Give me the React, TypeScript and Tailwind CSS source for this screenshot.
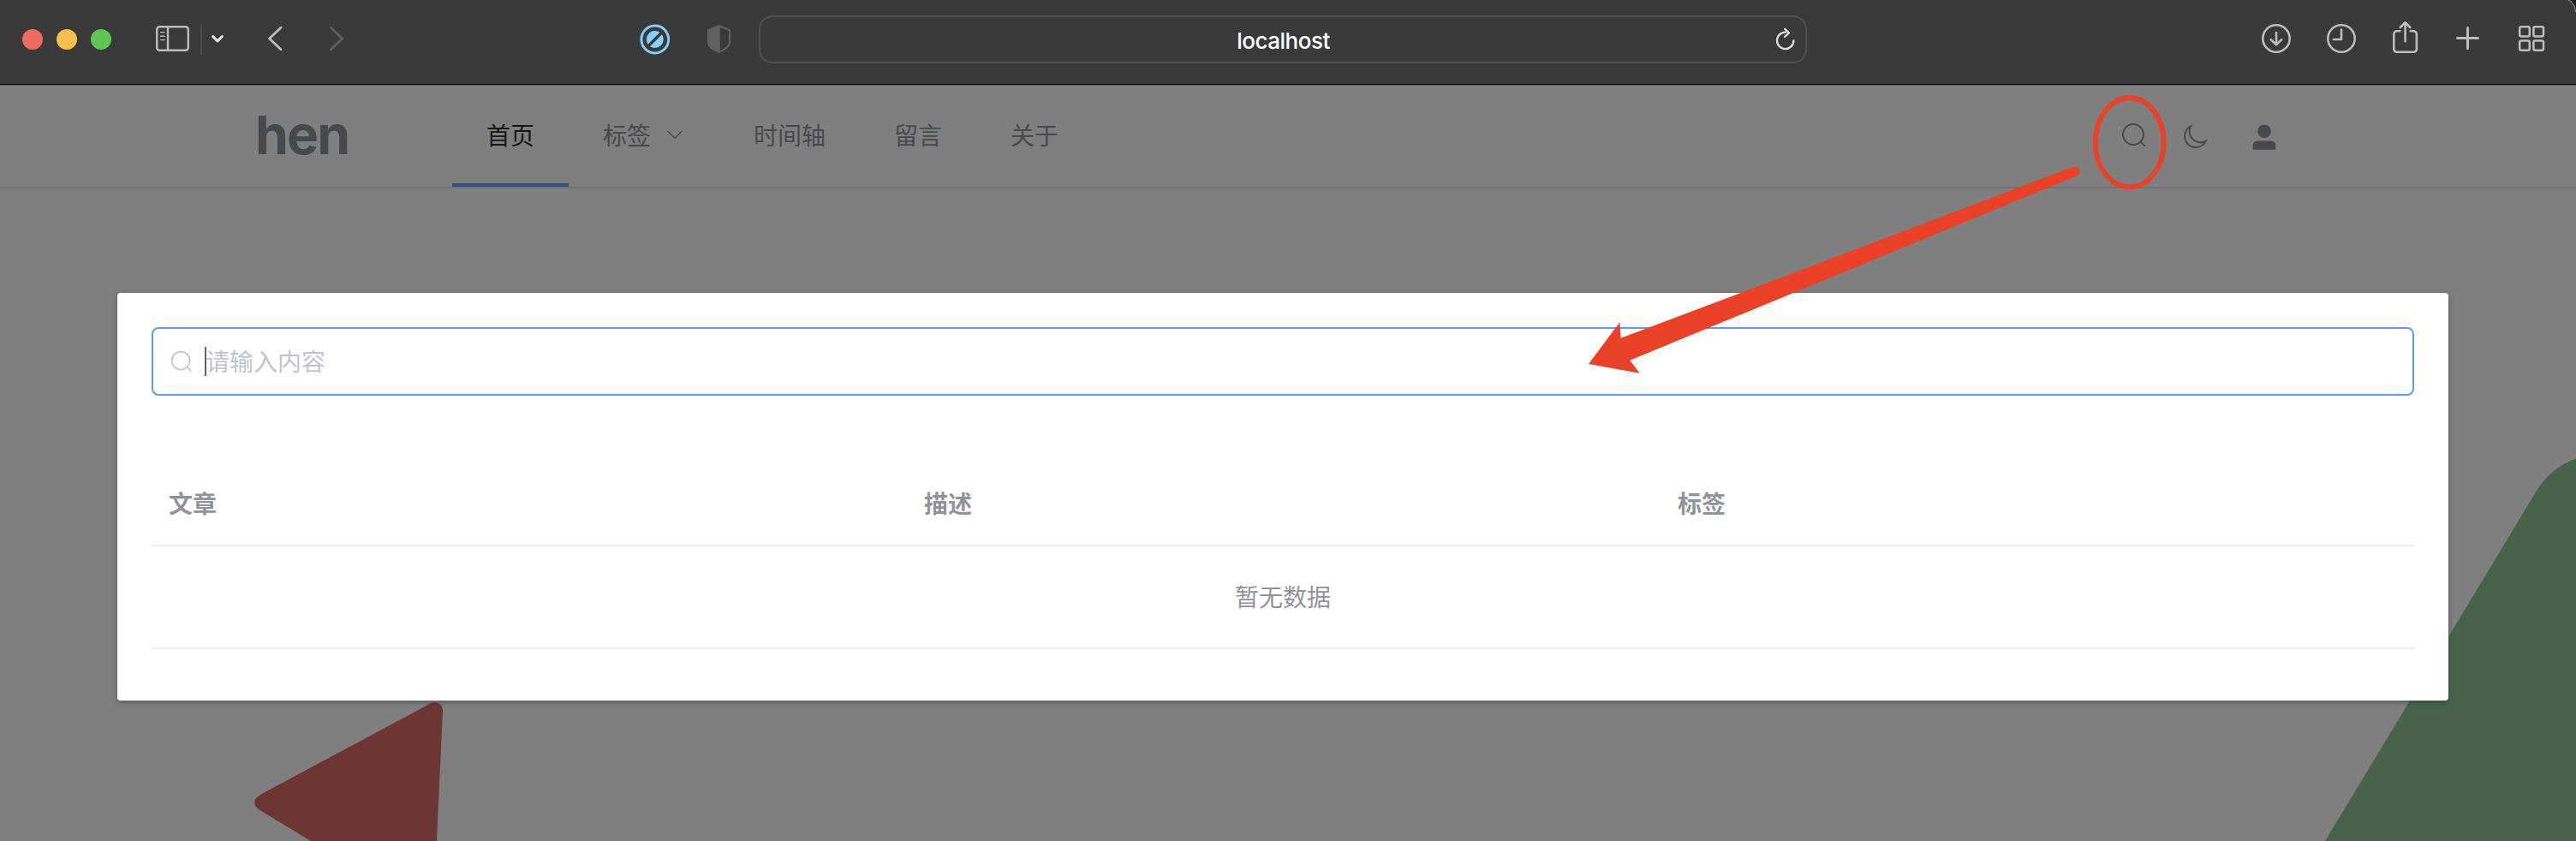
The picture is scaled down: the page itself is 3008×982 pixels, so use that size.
import React from "react";

const SEARCH_PATH =
  "m795.904 750.72 124.992 124.928a32 32 0 0 1-45.248 45.248L750.656 795.904a416 416 0 1 1 45.248-45.248zM480 832a352 352 0 1 0 0-704 352 352 0 0 0 0 704";
const MOON_PATH =
  "M240.448 240.448a384 384 0 1 0 559.424 525.696 448 448 0 0 1-542.016-542.08 390.592 390.592 0 0 0-17.408 16.384zm181.056 362.048a384 384 0 0 0 525.632 16.384A448 448 0 1 1 405.056 76.8a384 384 0 0 0 16.448 525.696";
const USER_PATH =
  "M288 320a224 224 0 1 0 448 0 224 224 0 1 0-448 0m544 608H160a32 32 0 0 1-32-32v-96a160 160 0 0 1 160-160h448a160 160 0 0 1 160 160v96a32 32 0 0 1-32 32z";
const ARROW_DOWN_PATH =
  "M831.872 340.864 512 652.672 192.128 340.864a30.592 30.592 0 0 0-42.752 0 29.12 29.12 0 0 0 0 41.6L489.664 714.24a32 32 0 0 0 44.672 0l340.288-331.712a29.12 29.12 0 0 0 0-41.728 30.592 30.592 0 0 0-42.752 0z";

function Glyph({ d, className }: { d: string; className: string }) {
  return (
    <svg viewBox="0 0 1024 1024" fill="currentColor" className={className}>
      <path d={d} />
    </svg>
  );
}

function BrowserBar() {
  return (
    <header className="relative flex h-[100px] w-full shrink-0 border-b border-[#636363] bg-black pb-px">
      <div className="flex h-[98px] w-full items-start bg-[#3a3a3a] text-[#bdbdbd]">
        <div className="flex gap-4 pt-[34px] pl-[26px]">
          <span className="size-6 rounded-full bg-[#ed6a5e]" />
          <span className="size-6 rounded-full bg-[#f5bf4f]" />
          <span className="size-6 rounded-full bg-[#61c554]" />
        </div>

        <svg className="mt-7 ml-[50px] h-9 w-[44px]" viewBox="180 28 44 36" fill="none" stroke="currentColor" strokeWidth="2.4">
          <rect x="183.2" y="31.2" width="36.6" height="27.6" rx="3.2" />
          <path d="M196 31v28" />
          <path d="M187.6 37.6h4.6M187.6 42.2h4.6M187.6 46.6h4.6" strokeWidth="1.4" strokeLinecap="round" />
        </svg>
        <span className="mt-7 ml-[10px] h-9 w-[2px] bg-[#4c4c4c]" />
        <svg className="mt-9 ml-2 h-5 w-5" viewBox="244 36 20 20" fill="none" stroke="#e6e6e6" strokeWidth="3" strokeLinecap="round" strokeLinejoin="round">
          <path d="M248.7 42.6l5.3 5.4 5.3-5.4" />
        </svg>
        <svg className="mt-7 ml-[46px] h-9 w-[22px]" viewBox="310 28 22 36" fill="none" stroke="#bdbdbd" strokeWidth="2.8" strokeLinecap="round" strokeLinejoin="round">
          <path d="M328 32.2L314.6 45 328 57.8" />
        </svg>
        <svg className="mt-7 ml-[50px] h-9 w-[22px]" viewBox="382 28 22 36" fill="none" stroke="#606060" strokeWidth="2.8" strokeLinecap="round" strokeLinejoin="round">
          <path d="M386.4 32.2L399.8 45l-13.4 12.8" />
        </svg>

        <svg className="mt-7 ml-[342px] h-9 w-[38px]" viewBox="746 28 38 36">
          <circle cx="764.8" cy="46" r="15.9" fill="none" stroke="#84ccfc" strokeWidth="3" />
          <circle cx="764.8" cy="46" r="10" fill="#84d3ff" />
          <path d="M755.6 55.2l18.4-18.4" stroke="#3a3a3a" strokeWidth="3.6" />
        </svg>
        <svg className="mt-7 ml-10 h-9 w-[32px]" viewBox="824 28 32 36" fill="none" stroke="#606060" strokeWidth="2.2" strokeLinejoin="round">
          <path d="M839.6 30.2l-12.5 5V49c0 5.500 5.500 8.500 12.500 12 7-3.500 12.500-6.500 12.500-12V35.200z" />
          <path d="M839.6 30.2l-12.500 5V49c0 5.500 5.500 8.500 12.500 12z" fill="#606060" />
        </svg>

        <div className="mt-[18px] ml-[30px] flex h-14 w-[1224px] items-center rounded-[16px] border-2 border-[#505050]">
          <div className="flex-1 pt-[3px] pl-[40px] text-center font-['Inter'] text-[26px] leading-none font-medium tracking-[-0.5px] text-white">
            localhost
          </div>
          <svg className="mr-[9px] h-[34px] w-[30px]" viewBox="2070 29 30 34" fill="none" stroke="#e0e0e0" strokeWidth="2.3" strokeLinecap="round" strokeLinejoin="round">
            <path d="M2086.300 37.700A9.700 9.700 0 1 0 2095.400 47.400" />
            <path d="M2085.200 33.800l4.800 4.500-5 4.700" />
          </svg>
        </div>

        <svg className="mt-7 ml-[528px] h-9 w-10" viewBox="2638 28 40 36" fill="none" stroke="currentColor" strokeWidth="2.6" strokeLinecap="round" strokeLinejoin="round">
          <circle cx="2658" cy="45" r="15.7" />
          <path d="M2658 38v14M2651.800 46.300l6.200 6 6.200-6" />
        </svg>
        <svg className="mt-7 ml-9 h-9 w-10" viewBox="2714 28 40 36" fill="none" stroke="currentColor" strokeWidth="2.6" strokeLinecap="round" strokeLinejoin="round">
          <circle cx="2734" cy="45" r="15.700" />
          <path d="M2734 34.500V46h-9.200" />
        </svg>
        <svg className="mt-6 ml-9 h-10 w-9" viewBox="2790 24 36 40" fill="none" stroke="currentColor" strokeWidth="2.6" strokeLinecap="round" strokeLinejoin="round">
          <path d="M2802.500 36.300h-3.700a3.500 3.500 0 0 0-3.500 3.500v17.500a3.500 3.500 0 0 0 3.500 3.500h19.600a3.500 3.500 0 0 0 3.500-3.500V39.800a3.500 3.500 0 0 0-3.500-3.500h-3.700" />
          <path d="M2808.600 48.300V26.500M2802.800 32l5.800-5.700 5.800 5.700" />
        </svg>
        <svg className="mt-7 ml-[38px] h-9 w-9" viewBox="2864 28 36 36" fill="none" stroke="currentColor" strokeWidth="3" strokeLinecap="round">
          <path d="M2881.500 32.500v24M2869.500 44.500h24" />
        </svg>
        <svg className="mt-7 ml-10 h-9 w-9" viewBox="2940 28 36 36" fill="none" stroke="currentColor" strokeWidth="2.500">
          <rect x="2942.200" y="31.200" width="11.600" height="11.400" rx="2" />
          <rect x="2958.400" y="31.200" width="11.600" height="11.400" rx="2" />
          <rect x="2942.200" y="47.400" width="11.600" height="11.400" rx="2" />
          <rect x="2958.400" y="47.400" width="11.600" height="11.400" rx="2" />
        </svg>
      </div>
      <svg className="absolute top-0 right-0 h-5 w-5" viewBox="0 0 20 20" fill="none">
        <path d="M12 0Q20 4 20 14V0z" fill="#1b1b1b" />
        <path d="M11 0Q19 4 19.500 14" stroke="#7d7d7d" strokeWidth="1.300" />
      </svg>
    </header>
  );
}

function SiteNav() {
  return (
    <nav className="flex h-[120px] w-full shrink-0 border-b-2 border-[#737373] pl-[298px] text-[28px] text-[#48494c]">
      <div className="w-[230px] pt-[21px] font-['Inter'] text-[62.5px] leading-[72px] font-[650] tracking-[-2px]">
        hen
      </div>
      <div className="flex leading-[120px]">
        <a className="h-[118px] border-b-4 border-[#2e4f80] px-10 text-[#161616]">首页</a>
        <a className="flex h-[118px] items-center gap-4 px-10">
          <span className="pt-0.5">标签</span>
          <Glyph d={ARROW_DOWN_PATH} className="mb-[5px] size-6" />
        </a>
        <a className="h-[118px] px-10">时间轴</a>
        <a className="h-[118px] px-10">留言</a>
        <a className="h-[118px] px-10">关于</a>
      </div>
      <div className="ml-[1200px] flex pt-[42px]">
        <Glyph d={SEARCH_PATH} className="size-8" />
        <Glyph d={MOON_PATH} className="mt-px ml-[40px] size-8" />
        <Glyph d={USER_PATH} className="ml-[46px] size-9" />
      </div>
    </nav>
  );
}

function Backdrop() {
  return (
    <svg className="absolute inset-0 h-[982px] w-[3008px]" viewBox="0 0 3008 982">
      <path
        d="M306 926.700L503 821.300C509.500 818 517.500 822 517 830.500L510 982H362.700L302 945C296 941 296 934 299.500 931.500Q302 929 306 926.700z"
        fill="#6e3632"
      />
      <path d="M2715 982L2961.700 573.500C2971 558 2987 542.500 3008 535.500V982z" fill="#47644b" />
    </svg>
  );
}

function SearchDialog() {
  const columns = ["文章", "描述", "标签"];
  return (
    <section className="relative mt-[122px] ml-[137px] h-[476px] w-[2722px] rounded-[4px] bg-white p-10 text-[28px] text-[#909399] shadow-[0_2px_6px_rgba(0,0,0,0.3)]">
      <div className="flex h-20 items-center rounded-lg border-2 border-[#5a9cf8] pl-[19px] text-[#c0c4cc]">
        <Glyph d={SEARCH_PATH} className="size-7" />
        <span className="ml-[13px] h-[34px] w-[2px] bg-[#606266]" />
        <span className="-ml-px pt-[3px]">请输入内容</span>
      </div>
      <div className="mt-[78px] grid h-[98px] grid-cols-[882px_880px_1fr] border-b-2 border-[#ebeef5] leading-[99px] font-bold">
        {columns.map((c) => (
          <div key={c} className="px-5">
            {c}
          </div>
        ))}
      </div>
      <div className="flex h-[120px] items-center justify-center border-b-2 border-[#ebeef5] pt-[3px]">
        暂无数据
      </div>
    </section>
  );
}

function Annotations() {
  return (
    <svg className="pointer-events-none absolute inset-0 h-[982px] w-[3008px]" viewBox="0 0 3008 982">
      <ellipse cx="2486.700" cy="166.200" rx="40" ry="52" fill="none" stroke="#ea4127" strokeWidth="6" />
      <path
        d="M1855 425L1891.400 376.300L1892.700 394.700L2032 342.300L2419 195.500C2424 193.800 2427 195.500 2428.500 199.500C2429.300 202.500 2427.500 204.500 2424.500 205.500L2093.500 342.300L1903.300 420.700L1914.700 435.700z"
        fill="#ea4127"
      />
    </svg>
  );
}

export default function App() {
  return (
    <div className="relative flex h-[982px] w-[3008px] flex-col overflow-hidden bg-[#7f7f7f] font-['Liberation_Sans','Noto_Sans_CJK_SC',sans-serif]">
      <Backdrop />
      <BrowserBar />
      <SiteNav />
      <SearchDialog />
      <Annotations />
    </div>
  );
}
